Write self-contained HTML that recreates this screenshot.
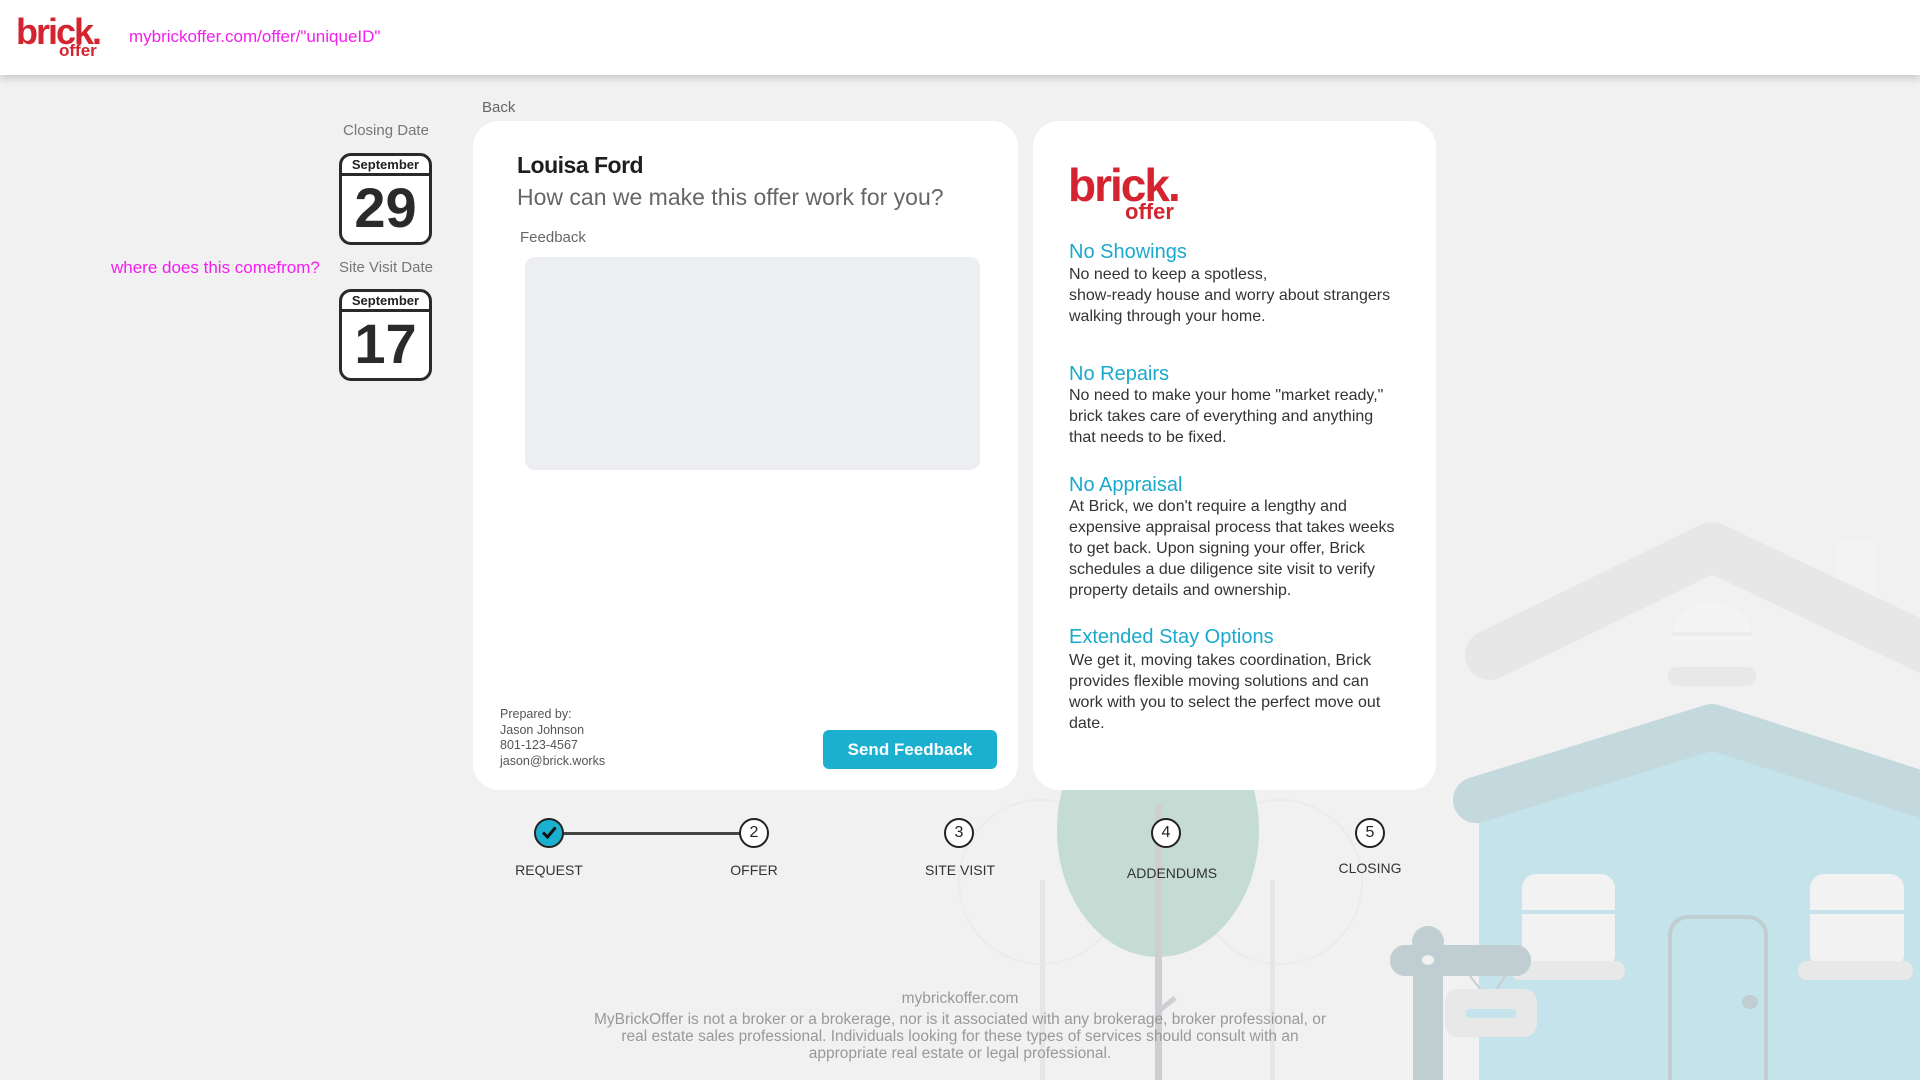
<!DOCTYPE html>
<html><head><meta charset="utf-8"><style>
*{margin:0;padding:0;box-sizing:border-box}
body{width:1920px;height:1080px;overflow:hidden;background:#f1f1f1;font-family:"Liberation Sans",sans-serif;position:relative;color:#333}
.a{position:absolute;white-space:nowrap}
.hdr{position:absolute;left:0;top:0;width:1920px;height:75px;background:#fff;box-shadow:0 3px 8px rgba(0,0,0,.18);z-index:5}
.card{position:absolute;background:#fff;border-radius:26px;z-index:3}
.cal{position:absolute;left:339px;width:93px;height:92px;border:3.5px solid #2a2a2a;border-radius:12px;background:#fff;z-index:3}
.cal .m{height:20px;border-bottom:3.5px solid #2a2a2a;text-align:center;font-weight:bold;font-size:13px;line-height:18px;color:#222}
.cal .d{text-align:center;font-weight:bold;font-size:56px;line-height:64px;color:#2a2a2a}
.h{font-size:20px;color:#1aa9cc}
.p{font-size:16px;line-height:21px;color:#333}
.st{position:absolute;width:30px;height:30px;border:2.5px solid #222;border-radius:50%;background:#fff;text-align:center;font-size:16px;line-height:25px;color:#222;z-index:3}
.lb{position:absolute;font-size:14px;color:#333;transform:translateX(-50%);z-index:3;white-space:nowrap}
</style></head><body>
<svg class="a" style="left:0;top:0;z-index:1" width="1920" height="1080">
<!-- trees -->
<circle cx="1041" cy="882" r="82" fill="none" stroke="#ebebeb" stroke-width="2"/>
<circle cx="1280" cy="882" r="82" fill="none" stroke="#ebebeb" stroke-width="2"/>
<rect x="1040" y="880" width="5" height="200" fill="#e6e6e6"/>
<rect x="1270" y="880" width="5" height="200" fill="#e6e6e6"/>
<ellipse cx="1158" cy="830" rx="101" ry="127" fill="#c4dcd3"/>
<rect x="1155" y="805" width="7" height="275" fill="#cfcfd3"/>
<path d="M1160 1010 L1175 998" stroke="#cfcfd3" stroke-width="5"/>
<!-- ghost house -->
<rect x="1837" y="542" width="40" height="60" fill="#f3f3f3"/>
<path d="M1490 655 L1712 547 L1940 655" stroke="#e7e7e7" stroke-width="50" fill="none" stroke-linecap="round" stroke-linejoin="round"/>
<path d="M1672 640 a40 38 0 0 1 80 0 z" fill="#f4f4f4"/>
<rect x="1672" y="632" width="80" height="4" fill="#ebebeb"/>
<rect x="1668" y="667" width="88" height="19" rx="9" fill="#e8e8e8"/>
<!-- blue house -->
<path d="M1479 800 L1712 735 L1920 800 L1920 1080 L1479 1080 Z" fill="#c5e3ea"/>
<path d="M1476 800 L1712 727 L1940 800" stroke="#c3d9de" stroke-width="46" fill="none" stroke-linecap="round" stroke-linejoin="round"/>
<rect x="1522" y="874" width="93" height="95" rx="14" fill="#f2f2f2"/>
<rect x="1522" y="910" width="93" height="4" fill="#c5e3ea"/>
<rect x="1511" y="961" width="114" height="19" rx="9" fill="#e8e8e8"/>
<rect x="1810" y="874" width="94" height="95" rx="14" fill="#f2f2f2"/>
<rect x="1810" y="910" width="94" height="4" fill="#c5e3ea"/>
<rect x="1798" y="961" width="115" height="19" rx="9" fill="#e8e8e8"/>
<path d="M1670 1080 V935 a18 18 0 0 1 18 -18 h60 a18 18 0 0 1 18 18 V1080" stroke="#c0cdd1" stroke-width="4" fill="none"/>
<ellipse cx="1750" cy="1002" rx="8" ry="7" fill="#c0cdd1"/>
<!-- sign post -->
<rect x="1413" y="940" width="30" height="140" fill="#c0cdd1"/>
<circle cx="1428" cy="942" r="16" fill="#c0cdd1"/>
<rect x="1390" y="945" width="141" height="31" rx="15" fill="#c0cdd1"/>
<ellipse cx="1428" cy="960" rx="6" ry="5" fill="#f2f2f2"/>
<path d="M1470 976 L1480 989 M1505 976 L1497 989" stroke="#ccc" stroke-width="2"/>
<rect x="1445" y="989" width="92" height="48" rx="13" fill="#e8e8e8"/>
<rect x="1466" y="1009" width="50" height="9" rx="3" fill="#c5e3ea"/>
</svg>

<div class="hdr">
 <div class="a" style="left:16px;top:13px;font-weight:bold;font-size:36px;color:#d42430;letter-spacing:-2px;line-height:38px">brick.</div>
 <div class="a" style="left:59px;top:42px;font-weight:bold;font-size:17px;color:#d42430;line-height:18px">offer</div>
 <div class="a" style="left:129px;top:27px;font-size:17px;color:#f51ef0">mybrickoffer.com/offer/"uniqueID"</div>
</div>

<div class="a" style="left:340px;top:122px;font-size:15px;color:#777;width:92px;text-align:center">Closing Date</div>
<div class="cal" style="top:153px"><div class="m">September</div><div class="d">29</div></div>
<div class="a" style="left:111px;top:258px;font-size:17px;color:#f51ef0">where does this comefrom?</div>
<div class="a" style="left:336px;top:259px;font-size:15px;color:#777;width:100px;text-align:center">Site Visit Date</div>
<div class="cal" style="top:289px"><div class="m">September</div><div class="d">17</div></div>

<div class="a" style="left:482px;top:99px;font-size:15px;color:#666">Back</div>

<div class="card" style="left:473px;top:121px;width:545px;height:669px">
 <div class="a" style="left:44px;top:31px;font-weight:bold;font-size:23px;color:#1e1e1e;letter-spacing:-0.5px">Louisa Ford</div>
 <div class="a" style="left:44px;top:63px;font-size:23px;color:#666">How can we make this offer work for you?</div>
 <div class="a" style="left:47px;top:108px;font-size:15px;color:#666">Feedback</div>
 <div class="a" style="left:52px;top:136px;width:455px;height:213px;background:#eceef1;border-radius:10px"></div>
 <div class="a" style="left:27px;top:586px;font-size:12.5px;line-height:15.5px;color:#555">Prepared by:<br>Jason Johnson<br>801-123-4567<br>jason@brick.works</div>
 <div class="a" style="left:350px;top:609px;width:174px;height:39px;background:#1cb0d0;border-radius:6px;color:#fff;font-weight:bold;font-size:17px;text-align:center;line-height:39px">Send Feedback</div>
</div>

<div class="card" style="left:1033px;top:121px;width:403px;height:669px">
 <div class="a" style="left:35px;top:40px;font-weight:bold;font-size:46px;color:#d42430;letter-spacing:-2px;line-height:48px">brick.</div>
 <div class="a" style="left:92px;top:79px;font-weight:bold;font-size:22px;color:#d42430;line-height:24px">offer</div>
 <div class="a h" style="left:36px;top:120px">No Showings</div>
 <div class="a p" style="left:36px;top:143px">No need to keep a spotless,<br>show-ready house and worry about strangers<br>walking through your home.</div>
 <div class="a h" style="left:36px;top:242px">No Repairs</div>
 <div class="a p" style="left:36px;top:264px">No need to make your home "market ready,"<br>brick takes care of everything and anything<br>that needs to be fixed.</div>
 <div class="a h" style="left:36px;top:353px">No Appraisal</div>
 <div class="a p" style="left:36px;top:375px">At Brick, we don't require a lengthy and<br>expensive appraisal process that takes weeks<br>to get back. Upon signing your offer,  Brick<br>schedules a due diligence site visit to verify<br>property details and ownership.</div>
 <div class="a h" style="left:36px;top:505px">Extended Stay Options</div>
 <div class="a p" style="left:36px;top:529px">We get it, moving takes coordination, Brick<br>provides flexible moving solutions and can<br>work with you to select the perfect move out<br>date.</div>
</div>

<div class="a" style="left:549px;top:832px;width:205px;height:3px;background:#444;z-index:2"></div>
<div class="st" style="left:534px;top:818px;background:#1cb0d0"><svg width="25" height="25" viewBox="0 0 25 25"><path d="M6 12.5 L10.5 17 L18.5 7.5" stroke="#111" stroke-width="3" fill="none"/></svg></div>
<div class="st" style="left:739px;top:818px">2</div>
<div class="st" style="left:944px;top:818px">3</div>
<div class="st" style="left:1151px;top:818px">4</div>
<div class="st" style="left:1355px;top:818px">5</div>
<div class="lb" style="left:549px;top:862px">REQUEST</div>
<div class="lb" style="left:754px;top:862px">OFFER</div>
<div class="lb" style="left:960px;top:862px">SITE VISIT</div>
<div class="lb" style="left:1172px;top:865px">ADDENDUMS</div>
<div class="lb" style="left:1370px;top:860px">CLOSING</div>

<div class="a" style="left:0;width:1920px;top:990px;text-align:center;font-size:15.5px;color:#999;z-index:3">mybrickoffer.com</div>
<div class="a" style="left:535px;width:850px;top:1011px;text-align:center;font-size:15.5px;line-height:17px;color:#999;white-space:normal;z-index:3">MyBrickOffer is not a broker or a brokerage, nor is it associated with any brokerage, broker professional, or<br>real estate sales professional. Individuals looking for these types of services should consult with an<br>appropriate real estate or legal professional.</div>
</body></html>
